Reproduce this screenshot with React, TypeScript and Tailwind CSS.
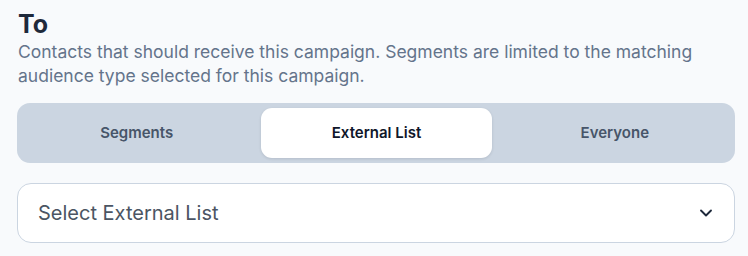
import React from "react";
import { ChevronDown } from "lucide-react";

export default function App() {
  const tabs = ["Segments", "External List", "Everyone"];
  const active = 1;
  return (
    <div
      className="w-[748px] h-[256px] bg-[#f8fafc] overflow-hidden"
      style={{ fontFamily: "Inter, 'Noto Sans', sans-serif" }}
    >
      <div className="ml-[17px] w-[718px] pt-[9px]">
        <h2 className="text-[25px] leading-[31px] font-bold text-[#1e293b] pl-[1px]">To</h2>
        <p className="text-[17.5px] leading-[24px] text-[#64748b] pl-[1px]">
          Contacts that should receive this campaign. Segments are limited to the matching
          <br />
          audience type selected for this campaign.
        </p>
        <div className="mt-[15px] h-[60px] rounded-[13px] bg-[#cbd5e1] grid grid-cols-3">
          {tabs.map((t, i) => (
            <div key={t} className={i === 0 ? "py-[5px] pl-[5px] pr-[5px]" : i === 1 ? "py-[5px] pl-[5px] pr-[4px]" : "py-[5px] pl-[4px] pr-[5px]"}>
              <div
                className={
                  i === active
                    ? "h-full rounded-[11px] bg-white shadow-[0_1px_3px_rgba(15,23,42,0.12)] flex items-center justify-center text-[15px] font-semibold text-[#0f172a]"
                    : "h-full rounded-[11px] flex items-center justify-center text-[15px] font-semibold text-[#475569]"
                }
              >
                {t}
              </div>
            </div>
          ))}
        </div>
        <div className="mt-[20px] h-[60px] rounded-[14px] border border-[#cbd5e1] bg-white flex items-center justify-between pl-[20px] pr-[18px]">
          <span className="text-[20px] text-[#4b5563] pb-[1px]">Select External List</span>
          <ChevronDown size={20} strokeWidth={2.25} className="text-[#1e293b]" />
        </div>
      </div>
    </div>
  );
}
